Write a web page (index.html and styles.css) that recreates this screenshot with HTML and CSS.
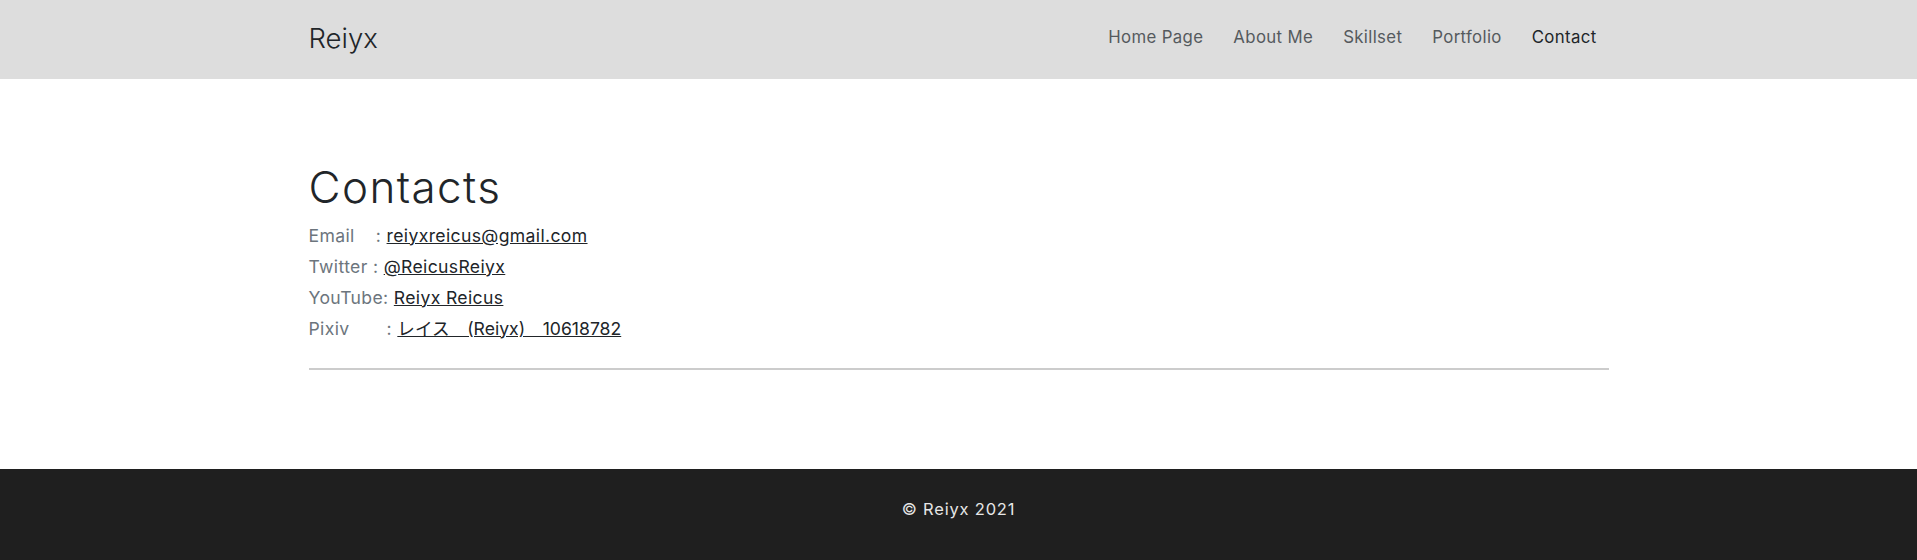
FILE: index.html
```html
<!DOCTYPE html>
<html lang="en">
<head>
<meta charset="utf-8">
<title>Reiyx - Contact</title>
<link rel="stylesheet" href="styles.css">
</head>
<body>
<header class="site-header">
  <div class="container header-inner">
    <a class="brand" href="#">Reiyx</a>
    <nav class="nav">
      <a class="nav-link" href="#">Home Page</a>
      <a class="nav-link" href="#">About Me</a>
      <a class="nav-link" href="#">Skillset</a>
      <a class="nav-link" href="#">Portfolio</a>
      <a class="nav-link active" href="#">Contact</a>
    </nav>
  </div>
</header>
<main class="main">
  <div class="container">
    <h1 class="title">Contacts</h1>
    <div class="contact-list">
      <div class="contact-row"><span class="label">Email&nbsp;&nbsp;&nbsp;&nbsp;:</span> <a class="link" href="#">reiyxreicus@gmail.com</a></div>
      <div class="contact-row"><span class="label">Twitter :</span> <a class="link" href="#">@ReicusReiyx</a></div>
      <div class="contact-row"><span class="label">YouTube:</span> <a class="link" href="#">Reiyx Reicus</a></div>
      <div class="contact-row"><span class="label">Pixiv&nbsp;&nbsp;&nbsp;&nbsp;&nbsp;&nbsp;&nbsp;:</span> <a class="link link-tight" href="#">レイス　(Reiyx)　10618782</a></div>
    </div>
    <hr class="divider">
  </div>
</main>
<footer class="site-footer">
  <div class="container footer-inner">© Reiyx 2021</div>
</footer>
</body>
</html>
```
FILE: styles.css
```css
html, body {
  margin: 0;
  padding: 0;
}
body {
  font-family: Inter, "Noto Sans", "Noto Sans CJK JP", sans-serif;
  color: #212529;
  background: #fff;
}
.container {
  max-width: 1300px;
  margin: 0 auto;
}
.site-header {
  background: #dddddd;
  height: 79px;
}
.header-inner {
  height: 100%;
  display: flex;
  align-items: center;
  justify-content: space-between;
}
.brand {
  font-size: 27.5px;
  font-weight: 300;
  color: #212529;
  text-decoration: none;
  margin-top: -3px;
}
.nav {
  display: flex;
  gap: 30px;
  padding-right: 12px;
  margin-top: -5px;
}
.nav-link {
  font-size: 16.8px;
  letter-spacing: 0.35px;
  color: #555a5e;
  text-decoration: none;
}
.nav-link.active {
  color: #212529;
}
.main {
  padding-top: 82px;
  padding-bottom: 99px;
}
.title {
  font-size: 44px;
  font-weight: 300;
  letter-spacing: 1.4px;
  line-height: 1.2;
  margin: 0 0 6px;
}
.contact-row {
  font-size: 17.6px;
  letter-spacing: 0.35px;
  line-height: 31px;
}
.label {
  color: #6c757d;
}
.link {
  color: #212529;
  text-decoration: underline;
}
.link-tight {
  letter-spacing: 0;
}
.divider {
  margin: 24px 0 0;
  border: 0;
  border-top: 2px solid #cccccc;
}
.site-footer {
  background: #1f1f1f;
  color: #e6e6e6;
  padding: 28px 0 40px;
}
.footer-inner {
  text-align: center;
  font-size: 16.5px;
  letter-spacing: 0.8px;
  line-height: 24px;
}
```
